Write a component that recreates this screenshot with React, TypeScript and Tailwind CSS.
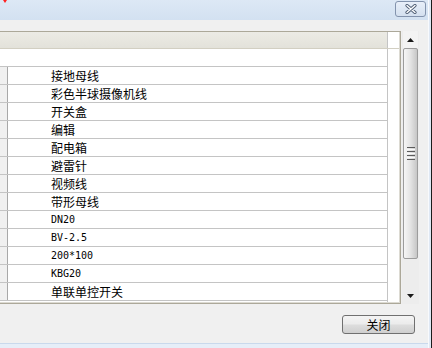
import React from "react";

const rows = [
  "接地母线",
  "彩色半球摄像机线",
  "开关盒",
  "编辑",
  "配电箱",
  "避雷针",
  "视频线",
  "带形母线",
  "DN20",
  "BV-2.5",
  "200*100",
  "KBG20",
  "单联单控开关",
];

const isLatin = (s: string) => /^[\x00-\x7f]+$/.test(s);

function Row({ text }: { text: string }) {
  return (
    <div className="flex h-[18px] border-t border-[#c4c4c4]">
      <div className="w-[8px] bg-[#f0f0f0] border-r border-[#a8a8a8]" />
      <div className="flex-1 flex items-center pl-[43px] text-black leading-none">
        {isLatin(text) ? (
          <span className="text-[10px] font-['DejaVu_Sans_Mono','Liberation_Mono',monospace] pt-[1px] text-black">
            {text}
          </span>
        ) : (
          <span className="text-[12px] font-['Noto_Sans_CJK_SC',sans-serif]">{text}</span>
        )}
      </div>
    </div>
  );
}

function Scrollbar() {
  return (
    <div className="ml-[1px] w-[17px] h-[273px] flex flex-col bg-[#ededed]">
      <div className="h-[17px] mx-[1px] flex items-center justify-center bg-[#f3f3f3]">
        <svg width="7" height="4" viewBox="0 0 7 4">
          <polygon points="3.5,0 7,4 0,4" fill="#1a1a1a" />
        </svg>
      </div>
      <div className="h-[211px] mx-[1px] rounded-[2px] border border-[#9c9c9c] bg-[linear-gradient(90deg,#f6f6f6,#e6e6e6_45%,#d2d2d2_80%,#c6c6c6)] flex items-center justify-center">
        <div className="flex flex-col gap-[1px]">
          <div className="w-[8px] h-[1px] bg-[#5c5c5c]" />
          <div className="w-[8px] h-[1px] bg-[#fafafa]" />
          <div className="w-[8px] h-[1px] bg-[#5c5c5c]" />
          <div className="w-[8px] h-[1px] bg-[#fafafa]" />
          <div className="w-[8px] h-[1px] bg-[#5c5c5c]" />
          <div className="w-[8px] h-[1px] bg-[#fafafa]" />
          <div className="w-[8px] h-[1px] bg-[#5c5c5c]" />
        </div>
      </div>
      <div className="flex-1" />
      <div className="h-[17px] mx-[1px] flex items-center justify-center">
        <svg width="7" height="4" viewBox="0 0 7 4">
          <polygon points="0,0 7,0 3.5,4" fill="#1a1a1a" />
        </svg>
      </div>
    </div>
  );
}

export default function App() {
  return (
    <div className="relative w-[432px] h-[348px] overflow-hidden flex bg-[#f0f0f0] font-['Noto_Sans_CJK_SC',sans-serif]">
      <div className="w-[428px] h-full flex flex-col">
        {/* title bar */}
        <div className="h-[20px] flex items-start justify-end bg-[linear-gradient(#dde8f5,#d3e1f1)] pr-[2px] pt-[1px]">
          <div className="w-[31px] h-[16px] rounded-[3px] border border-[#8393ad] bg-[linear-gradient(#e8eff9,#d4e0ef)] flex items-center justify-center">
            <svg width="12" height="10" viewBox="0 0 12 10">
              <path d="M2 1.5 L10 8.5 M10 1.5 L2 8.5" stroke="#4e5d74" strokeWidth="3.2" strokeLinecap="round" />
              <path d="M2 1.5 L10 8.5 M10 1.5 L2 8.5" stroke="#ffffff" strokeWidth="1.4" strokeLinecap="round" />
            </svg>
          </div>
        </div>
        {/* content */}
        <div className="flex-1 flex flex-col pt-[11px] bg-[#f0f0f0]">
          <div className="flex">
            <div className="w-[401px] h-[273px] border-t border-r border-[#aca899] flex flex-col">
              <div className="flex-1 flex flex-col bg-white border-r border-[#dcdad2]">
                {/* header */}
                <div className="flex h-[17px] border-b border-[#d2cfc2]">
                  <div className="w-[388px] bg-[linear-gradient(#ecebe5,#e3e2da)] border-r border-[#c4c4c4]" />
                  <div className="flex-1 bg-white" />
                </div>
                <div className="flex flex-1">
                  <div className="w-[388px] flex flex-col border-r border-[#c4c4c4]">
                    <div className="h-[17px]" />
                    {rows.map((r) => (
                      <Row key={r} text={r} />
                    ))}
                    <div className="border-t border-[#c4c4c4]" />
                  </div>
                  <div className="flex-1" />
                </div>
              </div>
              <div className="h-[1px] bg-[#dcdad2]" />
              <div className="h-[1px] bg-[#aca899]" />
            </div>
            <Scrollbar />
          </div>
          <div className="flex justify-end pr-[13px] mt-[11px]">
            <button className="w-[73px] h-[19px] rounded-[3px] border border-[#707070] bg-[linear-gradient(#f4f4f4,#ebebeb_48%,#dddddd_52%,#cfcfcf)] flex items-center justify-center text-[12px] leading-none text-black font-['Noto_Sans_CJK_SC',sans-serif]">
              关闭
            </button>
          </div>
          <div className="flex-1" />
        </div>
        {/* bottom frame */}
        <div className="h-[5px] border-t border-[#c9d9ec] bg-[#e6eef8]" />
      </div>
      {/* right frame */}
      <div className="w-[4px] h-full flex">
        <div className="w-[1px] bg-[#f8fafd]" />
        <div className="w-[2px] bg-[#dfe8f4]" />
        <div className="w-[1px] bg-[#1c1c1c]" />
      </div>
      <svg className="absolute left-[3px] top-0" width="4" height="3" viewBox="0 0 4 3">
        <polygon points="0,0 4,0 2,3" fill="#ff2020" />
      </svg>
    </div>
  );
}
